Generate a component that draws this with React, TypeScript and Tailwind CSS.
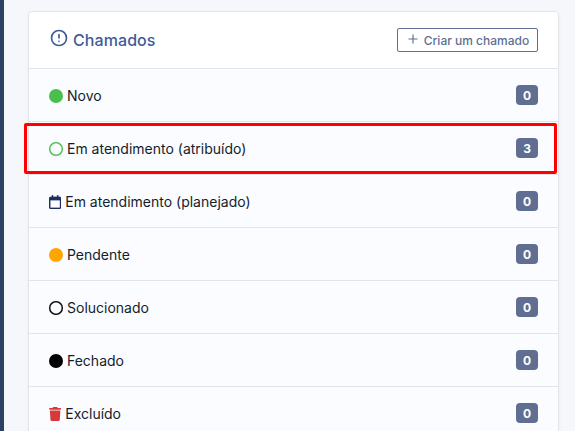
import type { ReactNode } from 'react';
import { FaCircle, FaRegCalendar, FaRegCircle, FaTrash } from 'react-icons/fa6';
import { TbAlertCircle, TbPlus } from 'react-icons/tb';

/** One status line of the ticket summary. */
interface StatusRow {
  label: string;
  count: number;
  icon: ReactNode;
  highlighted?: boolean;
}

const ROWS: StatusRow[] = [
  { label: 'Novo', count: 0, icon: <FaCircle className="size-3.5 text-[#49bf4d]" /> },
  {
    label: 'Em atendimento (atribuído)',
    count: 3,
    icon: <FaRegCircle className="size-3.5 stroke-[6] text-[#49bf4d]" />,
    highlighted: true,
  },
  {
    label: 'Em atendimento (planejado)',
    count: 0,
    icon: <FaRegCalendar className="h-3.5 w-[12.25px] stroke-[8] text-[#1b2f62]" />,
  },
  { label: 'Pendente', count: 0, icon: <FaCircle className="size-3.5 text-[#ffa500]" /> },
  {
    label: 'Solucionado',
    count: 0,
    icon: <FaRegCircle className="size-3.5 stroke-[6] text-black" />,
  },
  { label: 'Fechado', count: 0, icon: <FaCircle className="size-3.5 text-black" /> },
  {
    label: 'Excluído',
    count: 0,
    icon: <FaTrash className="h-3.5 w-[12.25px] text-[#d63939]" />,
  },
];

function TicketRow({ row }: { row: StatusRow }) {
  return (
    <li className="relative flex h-[53px] items-center justify-between border-b border-[#e2e4e9] pr-5 pl-5">
      <a href="#" className="flex items-center gap-1 pt-0.5 text-sm text-[#141d2b]">
        {row.icon}
        <span>{row.label}</span>
      </a>
      <span className="flex h-5 w-[22px] items-center justify-center rounded bg-[#606f91] pt-0.5 text-xs font-bold text-white">
        {row.count}
      </span>
      {row.highlighted ? (
        <span className="pointer-events-none absolute -left-[5px] top-px h-[51px] w-[533px] rounded-xs border-3 border-[#ff0000]" />
      ) : null}
    </li>
  );
}

export default function App() {
  return (
    <div className="flex h-[431px] w-[575px] overflow-hidden bg-[#f5f7fb] font-['Inter',sans-serif]">
      <aside className="w-1 shrink-0 bg-[#2f3f64]" />
      <main className="pt-[11px] pl-6">
        <section className="w-[531px] rounded border border-[#e2e4e9] bg-[#fbfcff] shadow-[0_2px_4px_rgba(24,36,51,0.04)]">
          <header className="flex h-[57px] items-center justify-between rounded-t border-b border-[#e2e4e9] bg-white pr-5 pl-5">
            <h2 className="flex items-center gap-1 text-base font-[460] tracking-[0.005em] text-[#3f5b9b]">
              <TbAlertCircle className="-mt-1 size-5" strokeWidth={2} />
              Chamados
            </h2>
            <button
              type="button"
              className="flex h-6 w-[141px] items-center justify-center gap-1 rounded-xs border border-[#606f91] pt-0.5 text-xs font-[450] text-[#606f91]"
            >
              <TbPlus className="-mt-1 size-3.5" strokeWidth={2} />
              Criar um chamado
            </button>
          </header>
          <ul>
            {ROWS.map((row) => (
              <TicketRow key={row.label} row={row} />
            ))}
          </ul>
        </section>
      </main>
    </div>
  );
}
